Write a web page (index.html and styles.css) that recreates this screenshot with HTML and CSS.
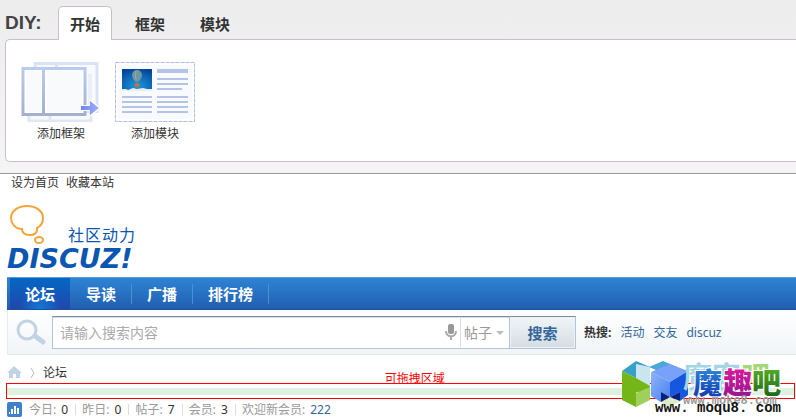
FILE: index.html
```html
<!DOCTYPE html>
<html lang="zh-CN">
<head>
    <meta charset="UTF-8">
    <meta name="viewport" content="width=device-width, initial-scale=1.0">
    <title>论坛 - Discuz!</title>
    <link rel="stylesheet" href="styles.css">
</head>
<body>
    <!-- DIY 面板 -->
    <div class="diy">
        <div class="diy-tabs">
            <span class="diy-title">DIY:</span>
            <a class="diy-tab active" href="#start">开始</a>
            <a class="diy-tab" href="#frame">框架</a>
            <a class="diy-tab" href="#block">模块</a>
        </div>
        <div class="diy-panel" id="start">
            <button class="tool" type="button">
                <svg width="80" height="60" viewBox="0 0 80 60" aria-hidden="true">
                    <defs>
                        <linearGradient id="frameLine" x1="0" y1="0" x2="0" y2="1">
                            <stop offset="0" stop-color="#b9cbf0"/>
                            <stop offset="1" stop-color="#a3b1cd"/>
                        </linearGradient>
                        <linearGradient id="arrowFill" x1="0" y1="0" x2="1" y2="0">
                            <stop offset="0" stop-color="#6d84f5"/>
                            <stop offset="1" stop-color="#a0b0fb"/>
                        </linearGradient>
                    </defs>
                    <rect x="8" y="14" width="62" height="45" fill="#f8fafd" stroke="#e0e7f2" stroke-width="3"/>
                    <path d="M29 54v6" stroke="#e0e7f2" stroke-width="3"/>
                    <rect x="14" y="1.500" width="62" height="48" fill="#f8fafd" stroke="#d9e3f6" stroke-width="3"/>
                    <path d="M35.500 0v8" stroke="#d9e3f6" stroke-width="3"/>
                    <path d="M67 12h4v30h-4" fill="#eaeff8"/>
                    <rect x="2" y="6.500" width="62" height="46" fill="#fff" stroke="url(#frameLine)" stroke-width="3"/>
                    <rect x="5" y="9" width="15" height="41" fill="#f8fafc"/>
                    <rect x="26" y="9" width="35" height="41" fill="#f8fafc"/>
                    <rect x="21" y="6" width="3" height="46" fill="url(#frameLine)"/>
                    <path d="M59 43h10v-6l11 9-11 9v-6H59z" fill="#fff"/>
                    <path d="M60 44h9v-5l9 7-9 7v-5h-9z" fill="url(#arrowFill)"/>
                </svg>
                <span>添加框架</span>
            </button>
            <button class="tool" type="button">
                <svg width="80" height="60" viewBox="0 0 80 60" aria-hidden="true">
                    <defs>
                        <radialGradient id="sky" cx="0.5" cy="0.8" r="0.8">
                            <stop offset="0" stop-color="#1c9bdc"/>
                            <stop offset="1" stop-color="#04469c"/>
                        </radialGradient>
                    </defs>
                    <rect x="3" y="3" width="74" height="54" fill="#f8fafd"/>
                    <rect x="0.500" y="0.500" width="79" height="59" fill="none" stroke="#adbfe4" stroke-dasharray="4 1"/>
                    <rect x="7" y="7" width="30" height="21" fill="url(#sky)"/>
                    <path d="M7 27h4l2 1 5-2 4 1 6-1 4 1h5v2H7z" fill="#e8eef5"/>
                    <path d="M17 13a5 5 0 0 1 10 0c0 3-2 5-4 7h-2c-2-2-4-4-4-7z" fill="#6f96a4"/>
                    <path d="M21 9q-1 5 0 9" stroke="#a5a49b" fill="none"/>
                    <rect x="20" y="21" width="4" height="4" rx="1" fill="#e0672b"/>
                    <g fill="#b3c4e6">
                        <rect x="42" y="7" width="31" height="4"/>
                        <rect x="42" y="16" width="31" height="2"/>
                        <rect x="42" y="21" width="31" height="2"/>
                        <rect x="42" y="26" width="25" height="2"/>
                        <rect x="7" y="34" width="30" height="2"/>
                        <rect x="7" y="39" width="30" height="2"/>
                        <rect x="7" y="44" width="30" height="2"/>
                        <rect x="7" y="49" width="30" height="2"/>
                        <rect x="42" y="34" width="31" height="2"/>
                        <rect x="42" y="39" width="31" height="2"/>
                        <rect x="42" y="44" width="31" height="2"/>
                        <rect x="42" y="49" width="31" height="2"/>
                    </g>
                </svg>
                <span>添加模块</span>
            </button>
        </div>
    </div>

    <div class="toptb">
        <a href="#home">设为首页</a>
        <a href="#fav">收藏本站</a>
    </div>

    <div class="wp">
        <a class="logo" href="#index">
            <span class="logo-top">
                <svg width="38" height="44" viewBox="0 0 38 44" fill="none" stroke="#f3a536" stroke-width="2" aria-hidden="true">
                    <path d="M15 25C8 25 4 19 4 14 4 7 11 2 20 2s16 5 16 12c0 5-2 8-6 10 1 5-3 7-7 7-5 0-8-2-8-6z"/>
                    <ellipse cx="32" cy="36" rx="4" ry="3"/>
                </svg>
                <span class="logo-sub">社区动力</span>
            </span>
            <span class="logo-name">DISCUZ!</span>
        </a>

        <nav class="nav">
            <a class="current" href="#forum">论坛</a>
            <a href="#guide">导读</a>
            <a href="#broadcast">广播</a>
            <a href="#rank">排行榜</a>
        </nav>

        <form class="search">
            <svg class="search-icon" width="30" height="26" viewBox="0 0 30 26" fill="none" stroke="#c2d3e3" aria-hidden="true">
                <circle cx="11" cy="11" r="9" stroke-width="3"/>
                <path d="M19 17l8 6" stroke-width="5" stroke-linecap="round"/>
            </svg>
            <div class="search-box">
                <input class="search-input" type="text" placeholder="请输入搜索内容" aria-label="搜索内容">
                <svg class="mic" width="12" height="16" viewBox="0 0 12 16" aria-hidden="true">
                    <rect x="3" y="0" width="6" height="10" rx="2" fill="#999"/>
                    <path d="M1 7c0 7 10 7 10 0M6 12v4" fill="none" stroke="#aaa" stroke-width="2"/>
                </svg>
                <div class="search-type">
                    <select aria-label="搜索类型">
                        <option>帖子</option>
                        <option>用户</option>
                    </select>
                </div>
            </div>
            <button class="search-btn" type="submit">搜索</button>
            <div class="hot">
                <strong>热搜:</strong>
                <a href="#activity">活动</a>
                <a href="#friends">交友</a>
                <a href="#discuz">discuz</a>
            </div>
        </form>

        <div class="crumb">
            <a href="#index" aria-label="首页">
                <svg width="15" height="13" viewBox="0 0 15 13" aria-hidden="true">
                    <path d="M7 0l8 7h-2v5H9V8H6v4H2V7H0z" fill="#c1d3e5"/>
                </svg>
            </a>
            <svg width="5" height="12" viewBox="0 0 5 12" fill="none" stroke="#bbb" aria-hidden="true">
                <path d="M1 1l3 5-3 5"/>
            </svg>
            <a href="#forum">论坛</a>
        </div>

        <div class="drop-area">
            <span class="drop-label">可拖拽区域</span>
            <div class="drop-bar"></div>
        </div>

        <div class="stats">
            <svg width="15" height="15" viewBox="0 0 15 15" aria-hidden="true">
                <rect width="15" height="15" rx="2" fill="#3d80cb"/>
                <path d="M2 10h1v2H2zM4 7h2v5H4zM7 4h2v8H7zM10 6h2v6h-2z" fill="#fff"/>
            </svg>
            <span>今日: <em>0</em></span>
            <span>昨日: <em>0</em></span>
            <span>帖子: <em>7</em></span>
            <span>会员: <em>3</em></span>
            <span>欢迎新会员: <a href="#user">222</a></span>
        </div>
    </div>

    <!-- 水印 -->
    <div class="watermark">
        <svg width="180" height="62" viewBox="0 0 180 62" aria-hidden="true">
            <defs>
                <linearGradient id="wmBlue" x1="0" y1="0" x2="0" y2="1">
                    <stop offset="0" stop-color="#3a9be8"/>
                    <stop offset="1" stop-color="#0a2fa8"/>
                </linearGradient>
                <linearGradient id="wmPink" x1="0" y1="0" x2="0" y2="1">
                    <stop offset="0" stop-color="#f01aa0"/>
                    <stop offset="1" stop-color="#8a1590"/>
                </linearGradient>
                <linearGradient id="wmGreen" x1="0" y1="0" x2="0" y2="1">
                    <stop offset="0" stop-color="#6cc02f"/>
                    <stop offset="1" stop-color="#0c5c12"/>
                </linearGradient>
                <linearGradient id="wmCube" x1="0" y1="0" x2="1" y2="1">
                    <stop offset="0" stop-color="#8db4fb"/>
                    <stop offset="1" stop-color="#4a80ee"/>
                </linearGradient>
            </defs>
            <path d="M2 13L16 3l14 6v14l-14-3z" fill="#36a0c9"/>
            <path d="M16 20V6l14 3v20z" fill="#c9e6ee"/>
            <path d="M29 9l14-6 14 6-14 6z" fill="#49a8d8"/>
            <path d="M2 13l14 7 14 8v7l-14-1v15L2 42z" fill="#74b517"/>
            <path d="M16 35l14-6v13l-14 7z" fill="#9ed05a"/>
            <path d="M41 44l9-5 10 4v1l-14 5z" fill="#dcebc4"/>
            <path d="M31 14l19-8 18 7-18 11z" fill="#78a2f8"/>
            <path d="M31 14l19 10v15l-9-5v10l-10-6z" fill="url(#wmCube)"/>
            <path d="M50 24l18-11v24l-8 6v-9l-10 5z" fill="#1557e0"/>
            <path d="M41 34l9 5-9 5zM60 34l-10 5 10 4z" fill="#07217f"/>
            <g class="wm-ghost">
                <text x="63" y="30" fill="#a5d5e4">魔客</text>
                <text x="121" y="30" fill="#a5d77c">吧</text>
            </g>
            <g class="wm-name">
                <text x="73" y="36" fill="url(#wmBlue)">魔</text>
                <text x="103" y="36" fill="url(#wmPink)">趣</text>
                <text x="132" y="36" fill="url(#wmGreen)">吧</text>
            </g>
            <g class="wm-url">
                <text x="63" y="46" class="wm-url-ghost">www.moke8.com</text>
                <text x="35" y="54">www. moqu8. com</text>
            </g>
        </svg>
    </div>
</body>
</html>
```

FILE: styles.css
```css
* {
    box-sizing: border-box;
}
body {
    margin: 0;
    background: #fff;
    color: #333;
    font: 12px/16px "Noto Sans", "Noto Sans CJK SC", sans-serif;
}
a {
    color: #333;
    text-decoration: none;
}
button, input, select {
    font-family: inherit;
}

/* DIY */
.diy {
    padding: 6px 0 11px 5px;
    background: linear-gradient(#ededed, #f4f4f4);
    border-bottom: 1px solid #999;
    overflow: hidden;
}
.diy-tabs {
    display: flex;
    height: 34px;
}
.diy-title {
    width: 53px;
    font: bold 19px/34px "Liberation Sans", sans-serif;
    color: #444;
}
.diy-tab {
    padding: 0 11px;
    margin-right: 11px;
    border: 1px solid transparent;
    border-bottom: 0;
    font-size: 15px;
    font-weight: bold;
    line-height: 34px;
}
.diy-tab.active {
    position: relative;
    background: #fff;
    border-color: #c8bfcb;
    border-radius: 5px 5px 0 0;
}
.diy-panel {
    display: flex;
    align-items: flex-start;
    gap: 14px;
    margin-top: -1px;
    padding: 22px 15px 19px;
    background: #fff;
    border: 1px solid #c8bfcb;
    border-right: 0;
    border-radius: 5px 0 0 5px;
}
.tool {
    display: flex;
    flex-direction: column;
    align-items: center;
    gap: 4px;
    padding: 0;
    background: none;
    border: 0;
    color: #333;
    font-size: 12px;
    line-height: 16px;
    cursor: pointer;
}
.tool svg {
    flex: none;
}

/* 顶部 */
.toptb {
    display: flex;
    gap: 7px;
    padding: 1px 11px 0;
}
.wp {
    padding-left: 7px;
}
.logo {
    display: block;
    width: fit-content;
    padding-top: 13px;
    height: 86px;
    color: #0b56b0;
}
.logo-top {
    display: flex;
    align-items: flex-end;
    gap: 23px;
}
.logo-sub {
    font-size: 16px;
    line-height: 26px;
    letter-spacing: 1px;
}
.logo-name {
    display: block;
    margin-top: -3px;
    font: italic bold 27px/28px "DejaVu Sans", sans-serif;
}

/* 导航 */
.nav {
    display: flex;
    height: 33px;
    padding-left: 3px;
    background: linear-gradient(#2e83d4, #205fb0);
    border-top: 1px solid #5a9ad8;
    border-bottom: 1px solid #1d5299;
}
.nav a {
    position: relative;
    padding: 0 15px;
    color: #fff;
    font-size: 15px;
    font-weight: bold;
    line-height: 32px;
}
.nav a::after {
    content: "";
    position: absolute;
    top: 6px;
    right: -1px;
    width: 1px;
    height: 20px;
    background: #4c8fd4;
}
.nav a + a {
    margin-left: 1px;
}
.nav .current {
    background: radial-gradient(ellipse at 50% 100%, #1279d8, transparent 50%), linear-gradient(#0467c5, #2147ab);
}
.nav .current::after {
    display: none;
}

/* 搜索 */
.search {
    display: flex;
    align-items: center;
    height: 45px;
    padding-left: 8px;
    background: linear-gradient(#fff, #f1f5f8);
    border: 1px solid #e3edf5;
    border-width: 0 0 1px 1px;
}
.search-icon {
    margin-right: 6px;
}
.search-box {
    display: flex;
    align-items: center;
    flex: 0 1 458px;
    height: 33px;
    background: #fff;
    border: 1px solid #b0c4da;
    border-top: 1px solid #7d8ea0;
    box-shadow: inset 0 1px 0 #d5dbe1;
}
.search-input {
    flex: 1;
    min-width: 0;
    padding: 0 7px;
    border: 0;
    background: none;
    font-size: 14px;
}
.search-input::placeholder {
    color: #aaa;
}
.mic {
    margin-right: 3px;
}
.search-type {
    position: relative;
    border-left: 1px solid #ddd;
}
.search-type::after {
    content: "";
    position: absolute;
    top: 14px;
    right: 5px;
    border: 4px solid transparent;
    border-top-color: #bbb;
    pointer-events: none;
}
.search-type select {
    width: 48px;
    height: 30px;
    padding: 0 0 0 3px;
    border: 0;
    background: none;
    color: #999;
    font-size: 14px;
    appearance: none;
}
.search-btn {
    width: 66px;
    height: 33px;
    padding: 0;
    background: linear-gradient(#f1f5f8, #d5dce3);
    border: 1px solid #b0c4da;
    border-left: 0;
    border-top-color: #7d8ea0;
    box-shadow: inset 0 0 0 1px #eef2f5;
    color: #369;
    font-size: 15px;
    font-weight: bold;
}
.hot {
    display: flex;
    gap: 9px;
    padding: 2px 0 0 8px;
    white-space: nowrap;
}
.hot a {
    color: #369;
}

/* 位置 */
.crumb {
    display: flex;
    align-items: center;
    gap: 8px;
    height: 28px;
    padding-top: 7px;
}
.crumb a {
    display: flex;
}
.drop-area {
    position: relative;
    height: 16px;
    margin: 0 1px 0 -1px;
    padding-top: 4px;
    border: 1px solid #f00;
}
.drop-label {
    position: absolute;
    top: -13px;
    left: 48%;
    color: #f00;
}
.drop-bar {
    height: 7px;
    background: #dff0df;
}

/* 统计 */
.stats {
    display: flex;
    align-items: center;
    height: 21px;
    color: #999;
    white-space: nowrap;
}
.stats svg {
    margin-right: 7px;
}
.stats span + span {
    margin-left: 7px;
    padding-left: 7px;
    background: linear-gradient(#ddd, #ddd) no-repeat 0 50% / 1px 11px;
}
.stats em,
.stats a {
    margin-left: 2px;
}
.stats em {
    color: #333;
    font-style: normal;
}
.stats a {
    color: #369;
}

/* 水印 */
.watermark {
    position: absolute;
    top: 358px;
    right: -4px;
    height: 62px;
    overflow: hidden;
}
.wm-name {
    font: 900 29px "Noto Sans CJK SC", sans-serif;
    stroke: #fff;
    stroke-width: 2px;
    paint-order: stroke;
}
.wm-ghost {
    font: bold 29px "Noto Sans CJK SC", sans-serif;
}
.wm-url {
    font: bold 14px "Liberation Mono", monospace;
    fill: #111;
}
.wm-url-ghost {
    font-size: 12px;
    fill: #999;
}
```
